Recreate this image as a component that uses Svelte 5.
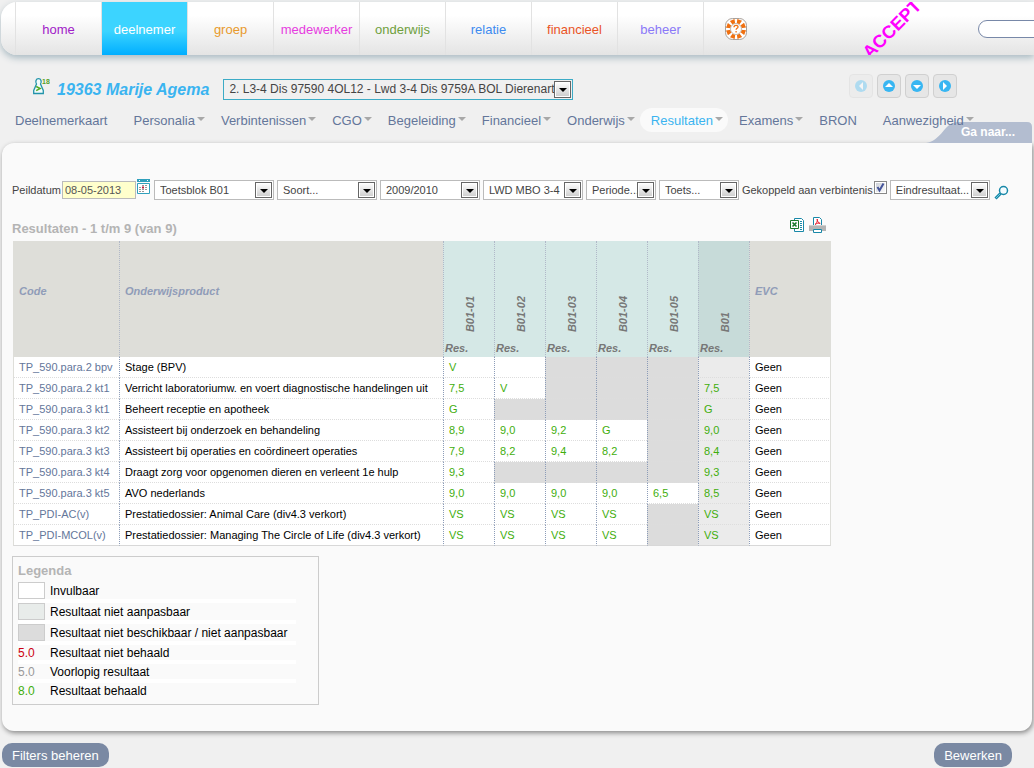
<script lang="ts">
    const modules = [
        { label: 'home', color: '#a020c8' },
        { label: 'deelnemer', color: '#ffffff', active: true },
        { label: 'groep', color: '#e89a2c' },
        { label: 'medewerker', color: '#e63ce0' },
        { label: 'onderwijs', color: '#6f9f3c' },
        { label: 'relatie', color: '#3d8bf0' },
        { label: 'financieel', color: '#ea5426' },
        { label: 'beheer', color: '#8a78f8' },
    ]

    const tabs = [
        { label: 'Deelnemerkaart', menu: false },
        { label: 'Personalia', menu: true },
        { label: 'Verbintenissen', menu: true },
        { label: 'CGO', menu: true },
        { label: 'Begeleiding', menu: true },
        { label: 'Financieel', menu: true },
        { label: 'Onderwijs', menu: true },
        { label: 'Resultaten', menu: true },
        { label: 'Examens', menu: true },
        { label: 'BRON', menu: false },
        { label: 'Aanwezigheid', menu: true },
    ]

    const pager = [
        { label: 'Vorige', points: '14,8 14,16 10,12', disabled: true },
        { label: 'Omhoog', points: '8,13 16,13 12,9', disabled: false },
        { label: 'Omlaag', points: '8,11 16,11 12,15', disabled: false },
        { label: 'Volgende', points: '10,8 10,16 14,12', disabled: false },
    ]

    const filters = [
        { name: 'Toetsblok', value: 'Toetsblok B01', width: 120 },
        { name: 'Soort', value: 'Soort...', width: 100 },
        { name: 'Cohort', value: '2009/2010', width: 100 },
        { name: 'Opleiding', value: 'LWD MBO 3-4', width: 100 },
        { name: 'Periode', value: 'Periode...', width: 70 },
        { name: 'Toets', value: 'Toets...', width: 80 },
    ]

    const columns = ['B01-01', 'B01-02', 'B01-03', 'B01-04', 'B01-05', 'B01']

    // '-' is a result that is not available for the product
    const rows = [
        { code: 'TP_590.para.2 bpv', product: 'Stage (BPV)', results: ['V', '', '-', '-', '-', ''] },
        { code: 'TP_590.para.2 kt1', product: 'Verricht laboratoriumw. en voert diagnostische handelingen uit', results: ['7,5', 'V', '-', '-', '-', '7,5'] },
        { code: 'TP_590.para.3 kt1', product: 'Beheert receptie en apotheek', results: ['G', '-', '-', '-', '-', 'G'] },
        { code: 'TP_590.para.3 kt2', product: 'Assisteert bij onderzoek en behandeling', results: ['8,9', '9,0', '9,2', 'G', '-', '9,0'] },
        { code: 'TP_590.para.3 kt3', product: 'Assisteert bij operaties en coördineert operaties', results: ['7,9', '8,2', '9,4', '8,2', '-', '8,4'] },
        { code: 'TP_590.para.3 kt4', product: 'Draagt zorg voor opgenomen dieren en verleent 1e hulp', results: ['9,3', '-', '-', '-', '-', '9,3'] },
        { code: 'TP_590.para.3 kt5', product: 'AVO nederlands', results: ['9,0', '9,0', '9,0', '9,0', '6,5', '8,5'] },
        { code: 'TP_PDI-AC(v)', product: 'Prestatiedossier: Animal Care (div4.3 verkort)', results: ['VS', 'VS', 'VS', 'VS', '-', 'VS'] },
        { code: 'TP_PDI-MCOL(v)', product: 'Prestatiedossier: Managing The Circle of Life (div4.3 verkort)', results: ['VS', 'VS', 'VS', 'VS', '-', 'VS'] },
    ]

    const rays = [0, 45, 90, 135, 180, 225, 270, 315]

    let activeTab = $state('Resultaten')
    let date = $state('08-05-2013')
    let linked = $state(true)
</script>

<header>
    <nav class="modules">
        {#each modules as module}
            <a href="#{module.label}" class:active={module.active} style="color: {module.color}">{module.label}</a>
        {/each}
        <a href="#help" aria-label="help">
            <svg width="24" height="24" viewBox="0 0 24 24">
                <rect x="1.500" y="1.500" width="21" height="21" rx="7" fill="#fff" stroke="#a8a09a" />
                {#each rays as ray}
                    <path d="M9.500 2.200h5l-1.200 4.800h-2.600z" fill="#f07010" transform="rotate({ray + 22} 12 12)" />
                {/each}
                <circle cx="12" cy="12" r="5.500" fill="#fff" stroke="#c8bdb4" />
                <path d="M10 10.200c0-2.600 4.200-2.400 4-.2-.1 1.400-1.900 1.300-1.900 2.800M12.100 14v1.400" fill="none" stroke="#f07010" stroke-width="1.300" />
            </svg>
        </a>
    </nav>
    <span class="stage">ACCEPT</span>
    <input class="search" type="text" aria-label="Zoeken" />
</header>

<section class="student">
    <svg width="17" height="18" viewBox="0 0 17 18">
        <path d="M3.500 7C2 4.500 3 1.700 5.500 1.700S9 4.500 7.500 7L10.300 13.500v3H.7v-3z" fill="#f2fbfb" stroke="#2294aa" stroke-width="1.300" />
        <path d="M3.200 9.500l4 2-4 2.200" fill="none" stroke="#55aa22" stroke-width="1.500" />
        <text x="9" y="7" font-size="7" font-weight="bold" fill="#55a028">18</text>
    </svg>
    <h1>19363 Marije Agema</h1>
    <span class="select enrolment">
        <select aria-label="Verbintenis">
            <option>2. L3-4 Dis 97590 4OL12 - Lwd 3-4 Dis 9759A BOL Dierenartsassistent</option>
        </select>
    </span>
    <div class="pager">
        {#each pager as button}
            <button aria-label={button.label} disabled={button.disabled}>
                <svg width="24" height="24" viewBox="0 0 24 24">
                    <circle cx="12" cy="12" r="6" fill="#38b6f2" />
                    <polygon points={button.points} fill="#fff" />
                </svg>
            </button>
        {/each}
    </div>
</section>

<nav class="tabs">
    {#each tabs as tab}
        <a href="#{tab.label}" class:menu={tab.menu} class:active={tab.label === activeTab} onclick={() => (activeTab = tab.label)}>{tab.label}</a>
    {/each}
</nav>

<main>
    <a class="goto" href="#ganaar">Ga naar...</a>

    <form class="filters">
        <label for="peildatum">Peildatum</label>
        <input id="peildatum" type="text" bind:value={date} />
        <button type="button" class="calendar" aria-label="Kalender">
            <svg width="14" height="16" viewBox="0 0 14 16">
                <path d="M0 0h13v3H0z" fill="#30a0bc" />
                <path d="M2 1h1v1H2zM10 1h1v1h-1z" fill="#fff" />
                <path d="M.5 4.500h12v10H.5z" fill="#fff" stroke="#30a0bc" />
                <path d="M5 6.500h6M2 8.500h9M2 10.500h9M2 12.500h5" stroke="#999" stroke-dasharray="2 1" />
                <path d="M5 8.500h2" stroke="#c02040" stroke-width="2" />
            </svg>
        </button>
        {#each filters as filter}
            <span class="select" style="width: {filter.width}px">
                <select aria-label={filter.name}><option>{filter.value}</option></select>
            </span>
        {/each}
        <label for="linked">Gekoppeld aan verbintenis</label>
        <span class="check">
            <input id="linked" type="checkbox" bind:checked={linked} />
            {#if linked}
                <svg width="13" height="13" viewBox="0 0 13 13"><path d="M3.500 6l2 3.500L9.500 2.500" fill="none" stroke="#44549a" stroke-width="2" /></svg>
            {/if}
        </span>
        <span class="select" style="width: 100px">
            <select aria-label="Resultaatsoort"><option>Eindresultaat...</option></select>
        </span>
        <button type="button" class="find" aria-label="Zoek">
            <svg width="15" height="15" viewBox="0 0 15 15">
                <circle cx="9.500" cy="5.500" r="4" fill="#f4fcff" stroke="#1888a8" stroke-width="1.500" />
                <path d="M6.500 8.500l-5 5" stroke="#1888a8" stroke-width="3" />
                <path d="M6 9l-4 4" stroke="#70c8dc" />
            </svg>
        </button>
    </form>

    <div class="results">
        <div class="caption">
            <h2>Resultaten - 1 t/m 9 (van 9)</h2>
            <button aria-label="Excel">
                <svg width="15" height="16" viewBox="0 0 15 16">
                    <path d="M4.500 1.500h7l2 2v11h-9z" fill="#fff" stroke="#1888a8" />
                    <path d="M10 4.500h2M10 6.500h2M10 8.500h2M10 10.500h2M10 12.500h2" stroke="#1888a8" />
                    <path d="M.5 3.500h8v8h-8z" fill="#fff" stroke="#1a7a2a" />
                    <path d="M2.500 5.500l4 4M6.500 5.500l-4 4" stroke="#1a7a2a" stroke-width="1.600" />
                </svg>
            </button>
            <button aria-label="PDF">
                <svg width="17" height="16" viewBox="0 0 17 16">
                    <path d="M4.500 9V.5h6l2 2V9" fill="#fff" stroke="#1888a8" />
                    <path d="M6 7.500c2-1.500 2.500-3 2.200-5.500.3 3 1.300 4.300 3 4.300-2-.3-3.600 0-5.200 1.200z" fill="none" stroke="#e82030" />
                    <path d="M0 8h17v6H0z" fill="#b4b4b4" />
                    <path d="M0 8h17v1H0z" fill="#d0d0d0" />
                    <path d="M4.500 12.500h8v3h-8z" fill="#fff" stroke="#1888a8" />
                </svg>
            </button>
        </div>
        <table>
            <colgroup>
                <col class="code" />
                <col />
                {#each columns as column}<col class="result" />{/each}
                <col class="evc" />
            </colgroup>
            <thead>
                <tr>
                    <th>Code</th>
                    <th>Onderwijsproduct</th>
                    {#each columns as column, i}
                        <th class="exam" class:total={i === 5}>
                            <div><span class="name">{column}</span><span>Res.</span></div>
                        </th>
                    {/each}
                    <th>EVC</th>
                </tr>
            </thead>
            <tbody>
                {#each rows as row}
                    <tr>
                        <td class="link">{row.code}</td>
                        <td>{row.product}</td>
                        {#each row.results as result, i}
                            <td class="grade" class:locked={i === 5} class:unavailable={result === '-'}>{result === '-' ? '' : result}</td>
                        {/each}
                        <td>Geen</td>
                    </tr>
                {/each}
            </tbody>
        </table>
    </div>

    <section class="legend">
        <h2>Legenda</h2>
        <ul>
            <li><i class="box"></i>Invulbaar</li>
            <li><i class="box fixed"></i>Resultaat niet aanpasbaar</li>
            <li><i class="box none"></i>Resultaat niet beschikbaar / niet aanpasbaar</li>
            <li><b class="failed">5.0</b>Resultaat niet behaald</li>
            <li><b class="draft">5.0</b>Voorlopig resultaat</li>
            <li><b class="passed">8.0</b>Resultaat behaald</li>
        </ul>
    </section>
</main>

<footer>
    <button>Filters beheren</button>
    <button>Bewerken</button>
</footer>

<style>
    :global(body) {
        background: #f0f0f0;
        font-family: "Liberation Sans", Arial, sans-serif;
        font-size: 11px;
        overflow-x: hidden;
    }

    a {
        text-decoration: none;
    }

    h1, h2, ul {
        margin: 0;
        padding: 0;
    }

    button, input, select {
        box-sizing: border-box;
        margin: 0;
        padding: 0;
        border: 0;
        background: none;
        font: inherit;
    }

    svg {
        display: block;
        flex: none;
    }

    header {
        display: flex;
        align-items: center;
        height: 53px;
        margin: 2px 0 0 1px;
        padding-left: 14px;
        border-radius: 16px 0 0 16px;
        background: linear-gradient(#fff 25%, #e4e4e4);
        box-shadow: 0 3px 7px #a9bac2;
        overflow: hidden;
    }

    .modules {
        display: flex;
        height: 100%;
    }

    .modules a {
        display: flex;
        align-items: center;
        justify-content: center;
        box-sizing: border-box;
        width: 86px;
        padding-top: 2px;
        border-left: 1px solid #e2e2e2;
        font-size: 13px;
    }

    .modules a:last-child {
        width: 64px;
        padding: 0;
    }

    .modules .active {
        background: linear-gradient(#3cd4ff 55%, #00aeff);
    }

    .stage {
        margin-left: 88px;
        color: #ff00ff;
        font-size: 18px;
        font-weight: bold;
        line-height: 18px;
        transform: rotate(-45deg);
    }

    .search {
        flex: none;
        width: 80px;
        height: 18px;
        margin: 0 -24px 0 auto;
        padding: 0 10px;
        border: 1px solid #7888a8;
        border-radius: 9px;
        background: #fff;
    }

    .student {
        display: flex;
        align-items: center;
        height: 24px;
        margin-top: 19px;
        padding: 0 77px 0 33px;
    }

    h1 {
        margin: 8px 0 0 7px;
        color: #3ab4f0;
        font-size: 16px;
        font-style: italic;
        line-height: 18px;
    }

    .select {
        position: relative;
        flex: none;
        box-sizing: border-box;
        height: 20px;
        border: 1px solid #bbb;
        background: #fff;
        color: #444;
    }

    .select select {
        display: block;
        width: 100%;
        height: 100%;
        padding: 0 17px 0 5px;
        appearance: none;
        color: inherit;
    }

    .select::before {
        content: "";
        position: absolute;
        top: 1px;
        right: 1px;
        bottom: 1px;
        box-sizing: border-box;
        width: 17px;
        border: 1px solid #666;
        background: linear-gradient(#fff, #ccc);
        box-shadow: inset 0 0 0 1px #fff;
        pointer-events: none;
    }

    .select::after {
        content: "";
        position: absolute;
        top: 8px;
        right: 5px;
        border: 4px solid transparent;
        border-top-color: #000;
        border-bottom: 0;
        pointer-events: none;
    }

    .enrolment {
        width: 350px;
        height: 21px;
        margin: 6px 0 0 14px;
        border-color: #3cabc6;
        background: transparent;
        font-size: 12px;
    }

    .pager {
        display: flex;
        gap: 4px;
        margin-left: auto;
    }

    .pager button {
        width: 24px;
        height: 24px;
        border: 1px solid #d0d0d0;
        border-radius: 4px;
        background: #e6e6e6;
    }

    .pager svg {
        margin: -1px;
    }

    .pager button:disabled {
        opacity: 0.35;
    }

    .tabs {
        position: relative;
        z-index: 1;
        display: flex;
        margin: 10px 0 11px 4px;
    }

    .tabs a {
        position: relative;
        padding: 2px 15px 0 11px;
        border-radius: 12px;
        color: #64769a;
        font-size: 13px;
        line-height: 22px;
    }

    .tabs .active {
        background: #fafafa;
        color: #3ab4f0;
    }

    .tabs .menu::after {
        content: "";
        position: absolute;
        top: 9px;
        right: 5px;
        border: 4px solid transparent;
        border-top-color: #a8a8a8;
        border-bottom: 0;
    }

    main {
        position: relative;
        margin: 0 2px;
        padding: 36px 10px 26px;
        border-radius: 12px 0 12px 12px;
        background: #fafafa;
        box-shadow: 1px 2px 5px #888;
    }

    .goto {
        position: absolute;
        right: 0;
        bottom: 100%;
        box-sizing: border-box;
        width: 106px;
        padding-left: 35px;
        background: #b3bdd0;
        clip-path: path("M0 21C14 19 18 4 27 1Q29 0 33 0H101Q106 0 106 5V21z");
        color: #fff;
        font-size: 12px;
        font-weight: bold;
        line-height: 21px;
    }

    .filters {
        display: flex;
        align-items: center;
        gap: 3px;
        height: 22px;
        color: #444;
        white-space: nowrap;
    }

    .filters label {
        margin-right: -2px;
    }

    #peildatum {
        width: 74px;
        height: 18px;
        padding: 0 2px;
        border: 1px solid #bbb;
        background: #ffffcc;
        color: #555;
    }

    .calendar {
        align-self: flex-start;
        margin: 0 0 0 -2px;
    }

    .check {
        position: relative;
        align-self: flex-start;
        margin-top: 2px;
    }

    .check input {
        display: block;
        width: 13px;
        height: 13px;
        appearance: none;
        border: 1px solid #888;
        background: linear-gradient(135deg, #c8ccd4, #fff);
        box-shadow: inset 0 0 0 1px #fff;
    }

    .check svg {
        position: absolute;
        inset: 0;
        pointer-events: none;
    }

    .find {
        margin: 4px 0 0 1px;
    }

    .results {
        width: min-content;
    }

    .caption {
        display: flex;
        gap: 4px;
        margin-top: 16px;
        padding-right: 5px;
        height: 24px;
    }

    h2 {
        color: #b4b4b4;
        font-size: 13px;
        line-height: 23px;
    }

    .caption h2 {
        margin-right: auto;
    }

    .caption button {
        align-self: flex-start;
    }

    table {
        width: 818px;
        margin-left: 1px;
        table-layout: fixed;
        border-collapse: separate;
        border-spacing: 0;
        background: #fff;
    }

    .code {
        width: 106px;
    }

    .result {
        width: 51px;
    }

    .evc {
        width: 82px;
    }

    th {
        box-sizing: border-box;
        height: 116px;
        padding: 0 5px 16px;
        border-left: 1px dotted #b0b8c8;
        background: #deded9;
        color: #909cb8;
        font-style: italic;
        text-align: left;
    }

    th:first-child {
        border-left: 1px solid #deded9;
    }

    .exam {
        padding: 0 1px 2px;
        background: #d5e8e6;
        color: #777;
        vertical-align: bottom;
    }

    .exam.total {
        background: #c7dbd9;
    }

    .exam div {
        display: flex;
        flex-direction: column;
        gap: 10px;
        line-height: 13px;
    }

    .name {
        align-self: center;
        margin-left: 2px;
        writing-mode: vertical-rl;
        transform: rotate(180deg);
    }

    td {
        box-sizing: border-box;
        height: 21px;
        padding: 0 5px;
        border-bottom: 1px dotted #ddd;
        border-left: 1px dotted #8c9cb8;
        white-space: nowrap;
    }

    td:first-child {
        border-left: 1px solid #deded9;
    }

    td:last-child {
        border-right: 1px solid #deded9;
    }

    tr:last-child td {
        border-bottom: 1px solid #d8d8d8;
    }

    .link {
        color: #64769a;
    }

    .grade {
        color: #3fae0c;
    }

    .locked {
        background: #ebebeb;
    }

    .unavailable {
        background: #dcdcdc;
    }

    .legend {
        box-sizing: border-box;
        width: 307px;
        margin-top: 10px;
        padding: 2px 5px;
        border: 1px solid #ccc;
    }

    ul {
        width: fit-content;
        min-width: 278px;
        font-size: 12px;
        list-style: none;
    }

    li {
        display: flex;
        align-items: center;
        min-height: 15px;
        border-bottom: 4px solid #fff;
    }

    li:last-child {
        border-color: transparent;
    }

    li b {
        width: 32px;
        font-weight: normal;
    }

    .box {
        box-sizing: border-box;
        width: 27px;
        height: 17px;
        margin-right: 5px;
        border: 1px solid #ccc;
        background: #fff;
    }

    .fixed {
        background: #e8ecea;
    }

    .none {
        background: #dcdcdc;
    }

    .failed {
        color: #cc0010;
    }

    .draft {
        color: #999;
    }

    .passed {
        color: #3fae0c;
    }

    footer {
        display: flex;
        justify-content: space-between;
        margin: 12px 22px 0 2px;
    }

    footer button {
        height: 24px;
        padding: 0 10px;
        border-radius: 10px;
        background: #7a89a3;
        color: #fff;
        font-size: 13px;
    }
</style>
